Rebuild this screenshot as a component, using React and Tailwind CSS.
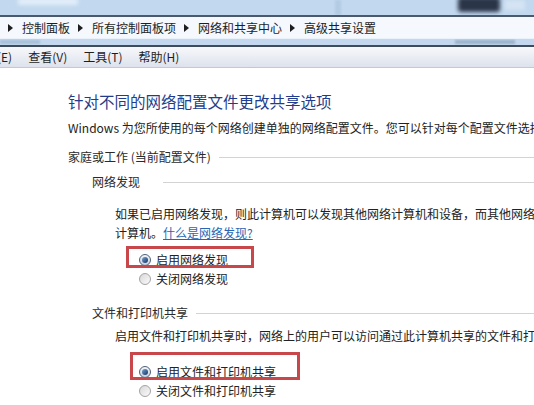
import React from "react";

const crumbs = ["控制面板", "所有控制面板项", "网络和共享中心", "高级共享设置"];
const menus = ["编辑(E)", "查看(V)", "工具(T)", "帮助(H)"];

function Arrow() {
  return (
    <svg width="5" height="8" viewBox="0 0 5 8" className="shrink-0">
      <path d="M0 0 L5 4 L0 8 Z" fill="#1e1e1e" />
    </svg>
  );
}

function Radio({ checked }) {
  if (checked) {
    return (
      <span className="w-[12px] h-[12px] rounded-full border border-[#4d6079] bg-gradient-to-b from-[#f4f6f8] to-[#c9d1db] flex items-center justify-center shrink-0">
        <span className="w-[6px] h-[6px] rounded-full bg-gradient-to-br from-[#7aa6da] to-[#15335f]" />
      </span>
    );
  }
  return (
    <span className="w-[12px] h-[12px] rounded-full border border-[#a3a3a3] bg-gradient-to-br from-[#d8d8d8] to-[#fbfbfb] shrink-0" />
  );
}

function Option({ checked, label }) {
  return (
    <div className="h-[19px] flex items-center pl-[24px]">
      <Radio checked={checked} />
      <span className="ml-[5px] text-[12px] text-[#222]">{label}</span>
    </div>
  );
}

function SectionHead({ title, gap }) {
  return (
    <div className="flex items-center h-[16px]">
      <span className="text-[12px] text-[#2a2a2a] whitespace-nowrap">{title}</span>
      <div className={`flex-1 h-px bg-[#d3d3d3] ${gap}`} />
    </div>
  );
}

export default function App() {
  return (
    <div
      className="w-[534px] h-[405px] overflow-hidden bg-white relative"
      style={{ fontFamily: '"Noto Sans CJK SC", "Noto Sans", sans-serif' }}
    >
      {/* aero glass strip */}
      <div className="h-[15px] bg-[#c1d8ef] relative overflow-hidden">
        <div className="absolute left-[18px] top-[-2px] w-[60px] h-[7px] bg-[#e3eef9] blur-[2px]" />
        <div className="absolute left-[335px] top-0 w-[6px] h-[15px] bg-[#b3cbe3] blur-[1px]" />
        <div className="absolute left-[458px] top-[-3px] w-[42px] h-[15px] rounded-[3px] bg-[#2b3548] blur-[2px]" />
        <div className="absolute left-[505px] top-0 w-[20px] h-[10px] bg-[#d5e4f3] blur-[2px]" />
      </div>
      <div className="h-[2px] bg-[#4a5a6c]" />

      {/* address bar */}
      <div className="h-[21px] bg-[#f5f8fc] flex items-center pl-[8px] text-[12px] text-[#1e1e1e]">
        {crumbs.map((c, i) => (
          <div key={c} className={`flex items-center ${i > 0 ? "ml-[8px]" : ""}`}>
            <Arrow />
            <span className="ml-[9px] whitespace-nowrap">{c}</span>
          </div>
        ))}
      </div>

      <div className="h-[7px] bg-[#c3d8ee] border-t border-[#e9f2fb] relative overflow-hidden">
        <div className="absolute left-0 top-[1px] w-[40px] h-[4px] bg-[#a9c0d9] blur-[1px]" />
        <div className="absolute left-[455px] top-[1px] w-[60px] h-[4px] bg-[#9cb3cd] blur-[1px]" />
      </div>
      <div className="h-[2px] bg-[#3e4b5a]" />

      {/* menu bar */}
      <div className="h-[21px] bg-gradient-to-b from-[#f7f8fb] to-[#dde2ec] border-b border-[#c4c8d0] flex items-center text-[12px] text-[#1e1e1e] gap-[16px] -ml-[27px]">
        {menus.map((m) => (
          <span key={m} className="whitespace-nowrap">{m}</span>
        ))}
      </div>

      {/* content */}
      <div className="pl-[68px] pt-[23px]">
        <h1 className="text-[15.5px] leading-[20px] font-normal text-[#1f3d8c] whitespace-nowrap">
          针对不同的网络配置文件更改共享选项
        </h1>
        <p className="mt-[9px] text-[12px] leading-[16px] text-[#222] whitespace-nowrap">
          Windows 为您所使用的每个网络创建单独的网络配置文件。您可以针对每个配置文件选择特定的选项。
        </p>

        <div className="mt-[13px]">
          <SectionHead title="家庭或工作 (当前配置文件)" gap="ml-[8px]" />
        </div>

        <div className="pl-[24px]">
          <div className="mt-[9px]">
            <SectionHead title="网络发现" gap="ml-[23px]" />
          </div>
          <div className="pl-[23px]">
            <div className="mt-[14px] text-[12px] leading-[19px] text-[#222]">
              <div className="whitespace-nowrap">
                如果已启用网络发现，则此计算机可以发现其他网络计算机和设备，而其他网络计算机亦可发现此
              </div>
              <div className="whitespace-nowrap">
                计算机。<span className="text-[#2a66b3] underline">什么是网络发现?</span>
              </div>
            </div>
            <div className="mt-[8px] relative">
              <Option checked label="启用网络发现" />
              <Option label="关闭网络发现" />
              <div className="absolute left-[11px] top-[-4px] w-[128px] h-[22px] border-[3px] border-[#c8474b]" />
            </div>
          </div>

          <div className="mt-[17px]">
            <SectionHead title="文件和打印机共享" gap="ml-[8px]" />
          </div>
          <div className="pl-[23px]">
            <div className="mt-[5px] text-[12px] leading-[19px] text-[#222] whitespace-nowrap">
              启用文件和打印机共享时，网络上的用户可以访问通过此计算机共享的文件和打印机。
            </div>
            <div className="mt-[17px] relative">
              <Option checked label="启用文件和打印机共享" />
              <Option label="关闭文件和打印机共享" />
              <div className="absolute left-[15px] top-[-10px] w-[170px] h-[28px] border-[3px] border-[#c8474b]" />
            </div>
          </div>
        </div>
      </div>
    </div>
  );
}
